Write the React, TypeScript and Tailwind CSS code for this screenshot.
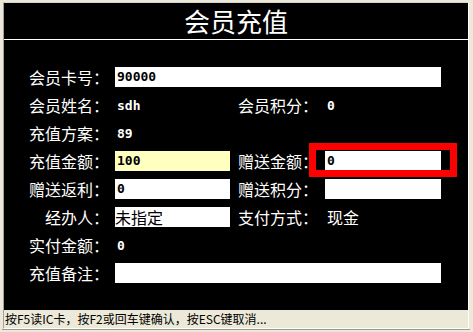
import React from "react";

const cjk = { fontFamily: '"Noto Sans CJK SC", "Noto Sans", sans-serif' };
const mono = { fontFamily: '"DejaVu Sans Mono", "Liberation Mono", monospace' };

function Label({ children }: { children: React.ReactNode }) {
  return (
    <div className="w-[80px] shrink-0 text-right text-[16px] leading-none text-white" style={cjk}>
      {children}
    </div>
  );
}

function Value({ children }: { children: React.ReactNode }) {
  return (
    <div className="pl-[2px] text-[13px] font-bold leading-none text-white" style={mono}>
      {children}
    </div>
  );
}

function Box({ children, className = "" }: { children?: React.ReactNode; className?: string }) {
  return (
    <div className={"flex h-[20px] items-center pl-[2px] text-[13px] font-bold text-black " + className} style={mono}>
      {children}
    </div>
  );
}

export default function App() {
  return (
    <div className="flex h-[332px] w-[473px] flex-col bg-[#ece9d8]">
      <div className="ml-[3px] mt-[2px] flex h-[308px] w-[466px] flex-col border-l border-t border-r border-l-[#a0a0a0] border-t-[#d8d6cc] border-r-[#ffffff] bg-black">
        <div className="flex h-[36px] items-center justify-center text-[26px] leading-none text-white" style={cjk}>
          会员充值
        </div>
        <div className="h-px bg-white" />
        <div className="flex flex-col pl-[25px] pt-[23px]">
          {/* row 1 */}
          <div className="flex h-[28px] items-center">
            <Label>会员卡号：</Label>
            <Box className="ml-[6px] w-[326px] bg-white">90000</Box>
          </div>
          {/* row 2 */}
          <div className="flex h-[28px] items-center">
            <Label>会员姓名：</Label>
            <div className="ml-[6px] w-[115px]">
              <Value>sdh</Value>
            </div>
            <div className="ml-[8px]">
              <Label>
                <span className="block text-left">会员积分：</span>
              </Label>
            </div>
            <div className="ml-[7px] w-[116px]">
              <Value>0</Value>
            </div>
          </div>
          {/* row 3 */}
          <div className="flex h-[28px] items-center">
            <Label>充值方案：</Label>
            <div className="ml-[6px] w-[115px]">
              <Value>89</Value>
            </div>
          </div>
          {/* row 4 */}
          <div className="flex h-[28px] items-center">
            <Label>充值金额：</Label>
            <Box className="ml-[6px] w-[115px] bg-[#ffffc0]">100</Box>
            <div className="ml-[8px]">
              <Label>
                <span className="block text-left">赠送金额：</span>
              </Label>
            </div>
            <div className="relative ml-[7px] w-[116px]">
              <Box className="w-[116px] bg-white">0</Box>
              <div className="pointer-events-none absolute left-[-16px] right-[-16px] top-[-8px] bottom-[-6px] border-[7px] border-[#ff0000]" />
            </div>
          </div>
          {/* row 5 */}
          <div className="flex h-[28px] items-center">
            <Label>赠送返利：</Label>
            <Box className="ml-[6px] w-[115px] bg-white">0</Box>
            <div className="ml-[8px]">
              <Label>
                <span className="block text-left">赠送积分：</span>
              </Label>
            </div>
            <Box className="ml-[7px] w-[116px] bg-white" />
          </div>
          {/* row 6 */}
          <div className="flex h-[28px] items-center">
            <Label>经办人：</Label>
            <div className="ml-[6px] flex h-[20px] w-[115px] items-center bg-white text-[16px] leading-none text-black" style={cjk}>
              未指定
            </div>
            <div className="ml-[8px]">
              <Label>
                <span className="block text-left">支付方式：</span>
              </Label>
            </div>
            <div className="ml-[7px] w-[116px] pl-[2px] text-[16px] leading-none text-white" style={cjk}>
              现金
            </div>
          </div>
          {/* row 7 */}
          <div className="flex h-[28px] items-center">
            <Label>实付金额：</Label>
            <div className="ml-[6px] w-[115px]">
              <Value>0</Value>
            </div>
          </div>
          {/* row 8 */}
          <div className="flex h-[28px] items-center">
            <Label>充值备注：</Label>
            <Box className="ml-[6px] w-[326px] bg-white" />
          </div>
        </div>
      </div>
      <div className="ml-[3px] flex h-[19px] w-[466px] items-center border-l border-b border-r border-l-[#a0a0a0] border-b-[#ffffff] border-r-[#ffffff] bg-[#ece9d8] pl-[1px] text-[12px] leading-none text-black" style={cjk}>
        按F5读IC卡，按F2或回车键确认，按ESC键取消...
      </div>
      <div className="ml-[2px] h-px w-[468px] bg-[#9a9a90]" />
    </div>
  );
}
